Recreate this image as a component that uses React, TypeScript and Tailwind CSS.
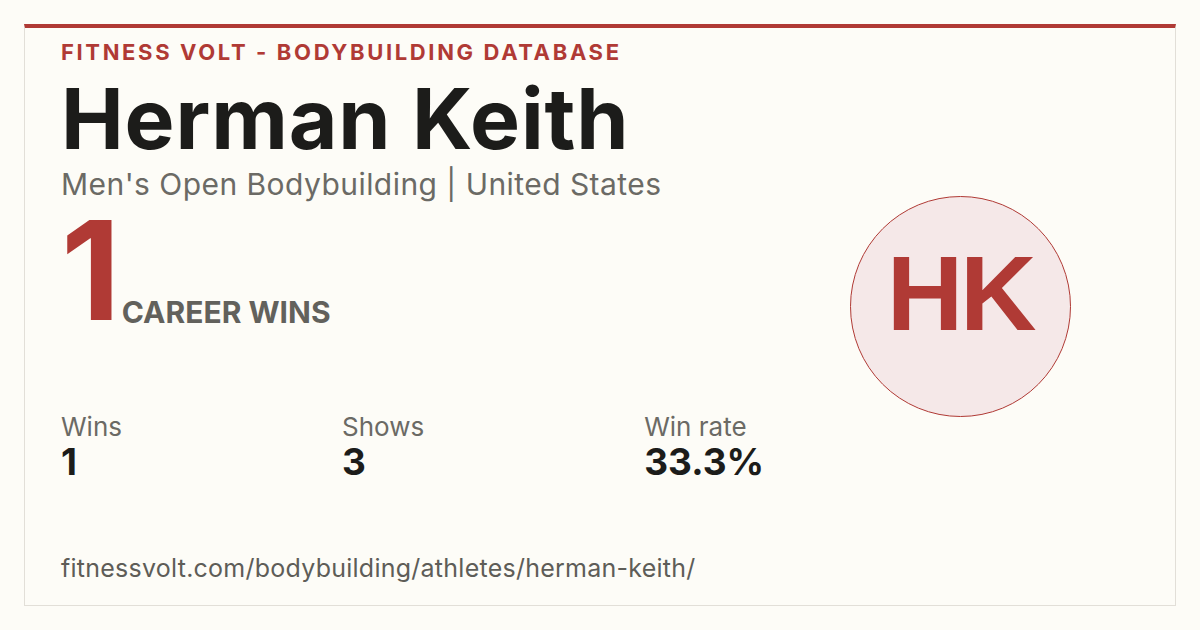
import React from "react";

export default function App() {
  const font = { fontFamily: "Inter, 'Noto Sans', sans-serif" };
  return (
    <div className="w-[1200px] h-[630px] bg-[#fdfcf7] pt-6 px-6" style={font}>
      <div className="h-[582px] border border-[#e2dfd8] border-t-4 border-t-[#b03a35] bg-[#fdfcf7] px-[36px] pt-[10px] flex">
        <div className="flex-1 flex flex-col">
          <div className="text-[22px] leading-[28px] font-bold tracking-[0.12em] text-[#b03a35]">
            FITNESS VOLT - BODYBUILDING DATABASE
          </div>
          <div className="text-[84px] leading-[96px] font-bold tracking-[0.01em] text-[#1c1c1a] mt-[5px]">
            Herman Keith
          </div>
          <div className="text-[30px] leading-[34px] tracking-[0.015em] text-[#6b6a65]">
            Men's Open Bodybuilding | United States
          </div>
          <div className="flex items-end mt-[9px]">
            <div className="text-[138px] leading-[120px] font-bold text-[#b03a35] tracking-[-0.02em]">1</div>
            <div className="text-[30px] leading-[34px] font-bold text-[#62615c] ml-[4px] mb-[1px]">
              CAREER WINS
            </div>
          </div>
          <div className="flex gap-[220px] mt-[82px]">
            <div className="flex flex-col">
              <div className="text-[26px] leading-[30px] text-[#6b6a65]">Wins</div>
              <div className="text-[37px] leading-[40px] font-bold text-[#1c1c1a]">1</div>
            </div>
            <div className="flex flex-col">
              <div className="text-[26px] leading-[30px] text-[#6b6a65]">Shows</div>
              <div className="text-[37px] leading-[40px] font-bold text-[#1c1c1a]">3</div>
            </div>
            <div className="flex flex-col">
              <div className="text-[26px] leading-[30px] text-[#6b6a65]">Win rate</div>
              <div className="text-[37px] leading-[40px] font-bold text-[#1c1c1a]">33.3%</div>
            </div>
          </div>
          <div className="mt-auto mb-[22px] text-[25px] leading-[30px] tracking-[0.01em] text-[#5e5d58]">
            fitnessvolt.com/bodybuilding/athletes/herman-keith/
          </div>
        </div>
        <div className="w-[300px] flex items-center justify-center pb-[30px] mr-[29px]">
          <div className="w-[221px] h-[221px] rounded-full bg-[#f5e8e8] border-[1.5px] border-[#b03a35] flex items-center justify-center">
            <span
              className="text-[106px] leading-none font-bold text-[#b03a35] tracking-[-0.03em] mb-[28px]"
              style={{ fontFamily: "'Liberation Sans', Arial, sans-serif" }}
            >
              HK
            </span>
          </div>
        </div>
      </div>
    </div>
  );
}
